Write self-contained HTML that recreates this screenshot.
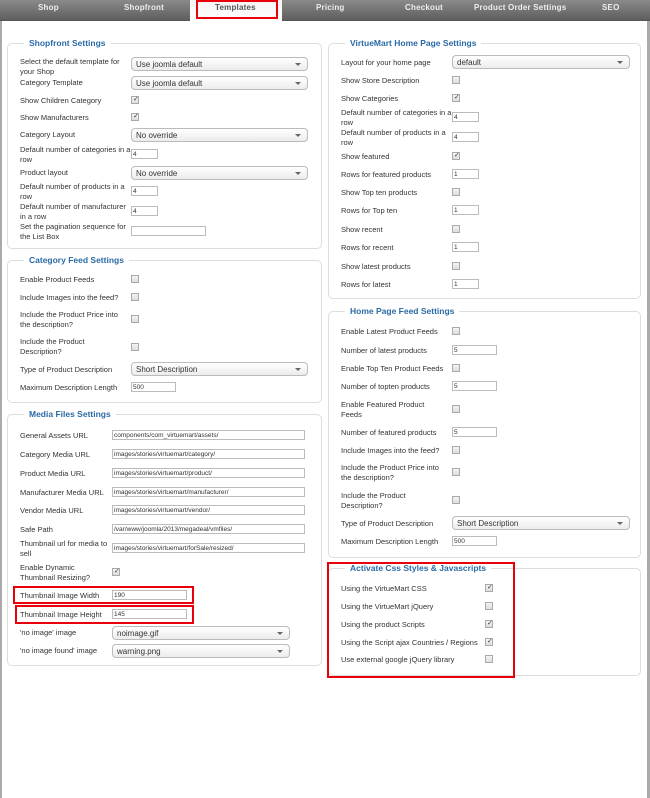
<!DOCTYPE html>
<html><head><meta charset="utf-8"><style>
*{margin:0;padding:0;box-sizing:border-box}
body{width:650px;height:798px;background:#fff;position:relative;overflow:hidden;font-family:"Liberation Sans",sans-serif;font-size:8px;color:#333}
.a{position:absolute}
.bar{left:0;top:0;width:650px;height:21px;background:linear-gradient(#8a8a8a,#5e5e5e);border-bottom:1px solid #555}
.tab{position:absolute;top:3px;color:#eee;font-weight:bold;font-size:8px;letter-spacing:.2px}
.fs{position:absolute;border:1px solid #ddd;border-radius:5px}
.lg{position:absolute;background:#fff;color:#2a6aa6;font-weight:bold;font-size:8.5px;padding:0 5px;top:-6px;left:16px}
.l{position:absolute;line-height:9.5px;font-size:7.5px}
.s{position:absolute;height:14px;border:1px solid #bbb;border-radius:4px;background:linear-gradient(#fff,#ececec);font-size:8px;padding:2px 0 0 4px;color:#333}
.s:after{content:"";position:absolute;right:6px;top:5px;border-left:3px solid transparent;border-right:3px solid transparent;border-top:3px solid #666}
.i{position:absolute;height:10px;border:1px solid #bbb;font-size:6.5px;padding:1px 0 0 1px;line-height:7px;background:#fff}
.c{position:absolute;width:8px;height:8px;border:1px solid #aaa;background:linear-gradient(#f4f4f4,#ddd)}
.k:after{content:"✓";position:absolute;left:1px;top:-2px;font-size:7px;color:#335}
.r{position:absolute;border:2px solid #e8000b}
</style></head><body>
<div class="a" style="left:0;top:21px;width:2px;height:777px;background:#aaa"></div>
<div class="a" style="left:647px;top:21px;width:3px;height:777px;background:#aaa"></div>
<div class="a bar"></div>
<div class="a" style="left:190px;top:0;width:92px;height:22px;background:linear-gradient(#f4f4f4,#fff)"></div>
<div class="tab" style="left:38px">Shop</div>
<div class="tab" style="left:124px">Shopfront</div>
<div class="tab" style="left:215px;color:#555">Templates</div>
<div class="tab" style="left:316px">Pricing</div>
<div class="tab" style="left:405px">Checkout</div>
<div class="tab" style="left:474px">Product Order Settings</div>
<div class="tab" style="left:602px">SEO</div>
<div class="r" style="left:196px;top:0;width:82px;height:19px"></div>

<!-- Shopfront -->
<div class="fs" style="left:7px;top:43px;width:315px;height:206px"><div class="lg">Shopfront Settings</div></div>
<div class="l" style="left:20px;top:57px">Select the default template for<br>your Shop</div><div class="s" style="left:131px;top:57px;width:177px">Use joomla default</div>
<div class="l" style="left:20px;top:78px">Category Template</div><div class="s" style="left:131px;top:76px;width:177px">Use joomla default</div>
<div class="l" style="left:20px;top:96px">Show Children Category</div><div class="c k" style="left:131px;top:96px"></div>
<div class="l" style="left:20px;top:113px">Show Manufacturers</div><div class="c k" style="left:131px;top:113px"></div>
<div class="l" style="left:20px;top:130px">Category Layout</div><div class="s" style="left:131px;top:128px;width:177px">No override</div>
<div class="l" style="left:20px;top:145px">Default number of categories in a<br>row</div><div class="i" style="left:131px;top:149px;width:27px">4</div>
<div class="l" style="left:20px;top:168px">Product layout</div><div class="s" style="left:131px;top:166px;width:177px">No override</div>
<div class="l" style="left:20px;top:182px">Default number of products in a<br>row</div><div class="i" style="left:131px;top:186px;width:27px">4</div>
<div class="l" style="left:20px;top:202px">Default number of manufacturer<br>in a row</div><div class="i" style="left:131px;top:206px;width:27px">4</div>
<div class="l" style="left:20px;top:222px">Set the pagination sequence for<br>the List Box</div><div class="i" style="left:131px;top:226px;width:75px"></div>

<!-- Category feed -->
<div class="fs" style="left:7px;top:260px;width:315px;height:143px"><div class="lg">Category Feed Settings</div></div>
<div class="l" style="left:20px;top:275px">Enable Product Feeds</div><div class="c" style="left:131px;top:275px"></div>
<div class="l" style="left:20px;top:293px">Include Images into the feed?</div><div class="c" style="left:131px;top:293px"></div>
<div class="l" style="left:20px;top:310px">Include the Product Price into<br>the description?</div><div class="c" style="left:131px;top:315px"></div>
<div class="l" style="left:20px;top:337px">Include the Product<br>Description?</div><div class="c" style="left:131px;top:343px"></div>
<div class="l" style="left:20px;top:365px">Type of Product Description</div><div class="s" style="left:131px;top:362px;width:177px">Short Description</div>
<div class="l" style="left:20px;top:383px">Maximum Description Length</div><div class="i" style="left:131px;top:382px;width:45px">500</div>

<!-- Media -->
<div class="fs" style="left:7px;top:414px;width:315px;height:252px"><div class="lg">Media Files Settings</div></div>
<div class="l" style="left:20px;top:431px">General Assets URL</div><div class="i" style="left:112px;top:430px;width:193px">components/com_virtuemart/assets/</div>
<div class="l" style="left:20px;top:450px">Category Media URL</div><div class="i" style="left:112px;top:449px;width:193px">images/stories/virtuemart/category/</div>
<div class="l" style="left:20px;top:469px">Product Media URL</div><div class="i" style="left:112px;top:468px;width:193px">images/stories/virtuemart/product/</div>
<div class="l" style="left:20px;top:488px">Manufacturer Media URL</div><div class="i" style="left:112px;top:487px;width:193px">images/stories/virtuemart/manufacturer/</div>
<div class="l" style="left:20px;top:506px">Vendor Media URL</div><div class="i" style="left:112px;top:505px;width:193px">images/stories/virtuemart/vendor/</div>
<div class="l" style="left:20px;top:525px">Safe Path</div><div class="i" style="left:112px;top:524px;width:193px">/var/www/joomla/2013/megadeal/vmfiles/</div>
<div class="l" style="left:20px;top:539px">Thumbnail url for media to<br>sell</div><div class="i" style="left:112px;top:543px;width:193px">images/stories/virtuemart/forSale/resized/</div>
<div class="l" style="left:20px;top:563px">Enable Dynamic<br>Thumbnail Resizing?</div><div class="c k" style="left:112px;top:568px"></div>
<div class="l" style="left:20px;top:591px">Thumbnail Image Width</div><div class="i" style="left:112px;top:590px;width:75px">190</div>
<div class="l" style="left:20px;top:610px">Thumbnail Image Height</div><div class="i" style="left:112px;top:609px;width:75px">145</div>
<div class="r" style="left:13px;top:586px;width:181px;height:18px"></div>
<div class="r" style="left:15px;top:605px;width:179px;height:19px"></div>
<div class="l" style="left:20px;top:628px">'no image' image</div><div class="s" style="left:112px;top:626px;width:178px">noimage.gif</div>
<div class="l" style="left:20px;top:646px">'no image found' image</div><div class="s" style="left:112px;top:644px;width:178px">warning.png</div>

<!-- VirtueMart Home -->
<div class="fs" style="left:328px;top:43px;width:313px;height:256px"><div class="lg">VirtueMart Home Page Settings</div></div>
<div class="l" style="left:341px;top:58px">Layout for your home page</div><div class="s" style="left:452px;top:55px;width:178px">default</div>
<div class="l" style="left:341px;top:76px">Show Store Description</div><div class="c" style="left:452px;top:76px"></div>
<div class="l" style="left:341px;top:94px">Show Categories</div><div class="c k" style="left:452px;top:94px"></div>
<div class="l" style="left:341px;top:108px">Default number of categories in a<br>row</div><div class="i" style="left:452px;top:112px;width:27px">4</div>
<div class="l" style="left:341px;top:128px">Default number of products in a<br>row</div><div class="i" style="left:452px;top:132px;width:27px">4</div>
<div class="l" style="left:341px;top:152px">Show featured</div><div class="c k" style="left:452px;top:152px"></div>
<div class="l" style="left:341px;top:170px">Rows for featured products</div><div class="i" style="left:452px;top:169px;width:27px">1</div>
<div class="l" style="left:341px;top:188px">Show Top ten products</div><div class="c" style="left:452px;top:188px"></div>
<div class="l" style="left:341px;top:206px">Rows for Top ten</div><div class="i" style="left:452px;top:205px;width:27px">1</div>
<div class="l" style="left:341px;top:225px">Show recent</div><div class="c" style="left:452px;top:225px"></div>
<div class="l" style="left:341px;top:243px">Rows for recent</div><div class="i" style="left:452px;top:242px;width:27px">1</div>
<div class="l" style="left:341px;top:262px">Show latest products</div><div class="c" style="left:452px;top:262px"></div>
<div class="l" style="left:341px;top:280px">Rows for latest</div><div class="i" style="left:452px;top:279px;width:27px">1</div>

<!-- Home Page Feed -->
<div class="fs" style="left:328px;top:311px;width:313px;height:247px"><div class="lg">Home Page Feed Settings</div></div>
<div class="l" style="left:341px;top:327px">Enable Latest Product Feeds</div><div class="c" style="left:452px;top:327px"></div>
<div class="l" style="left:341px;top:346px">Number of latest products</div><div class="i" style="left:452px;top:345px;width:45px">5</div>
<div class="l" style="left:341px;top:364px">Enable Top Ten Product Feeds</div><div class="c" style="left:452px;top:364px"></div>
<div class="l" style="left:341px;top:382px">Number of topten products</div><div class="i" style="left:452px;top:381px;width:45px">5</div>
<div class="l" style="left:341px;top:400px">Enable Featured Product<br>Feeds</div><div class="c" style="left:452px;top:405px"></div>
<div class="l" style="left:341px;top:428px">Number of featured products</div><div class="i" style="left:452px;top:427px;width:45px">5</div>
<div class="l" style="left:341px;top:446px">Include Images into the feed?</div><div class="c" style="left:452px;top:446px"></div>
<div class="l" style="left:341px;top:463px">Include the Product Price into<br>the description?</div><div class="c" style="left:452px;top:468px"></div>
<div class="l" style="left:341px;top:491px">Include the Product<br>Description?</div><div class="c" style="left:452px;top:496px"></div>
<div class="l" style="left:341px;top:519px">Type of Product Description</div><div class="s" style="left:452px;top:516px;width:178px">Short Description</div>
<div class="l" style="left:341px;top:537px">Maximum Description Length</div><div class="i" style="left:452px;top:536px;width:45px">500</div>

<!-- Activate -->
<div class="fs" style="left:328px;top:568px;width:313px;height:108px"><div class="lg">Activate Css Styles &amp; Javascripts</div></div>
<div class="l" style="left:341px;top:584px">Using the VirtueMart CSS</div><div class="c k" style="left:485px;top:584px"></div>
<div class="l" style="left:341px;top:602px">Using the VirtueMart jQuery</div><div class="c" style="left:485px;top:602px"></div>
<div class="l" style="left:341px;top:620px">Using the product Scripts</div><div class="c k" style="left:485px;top:620px"></div>
<div class="l" style="left:341px;top:638px">Using the Script ajax Countries / Regions</div><div class="c k" style="left:485px;top:638px"></div>
<div class="l" style="left:341px;top:655px">Use external google jQuery library</div><div class="c" style="left:485px;top:655px"></div>
<div class="r" style="left:327px;top:562px;width:188px;height:116px"></div>
</body></html>
